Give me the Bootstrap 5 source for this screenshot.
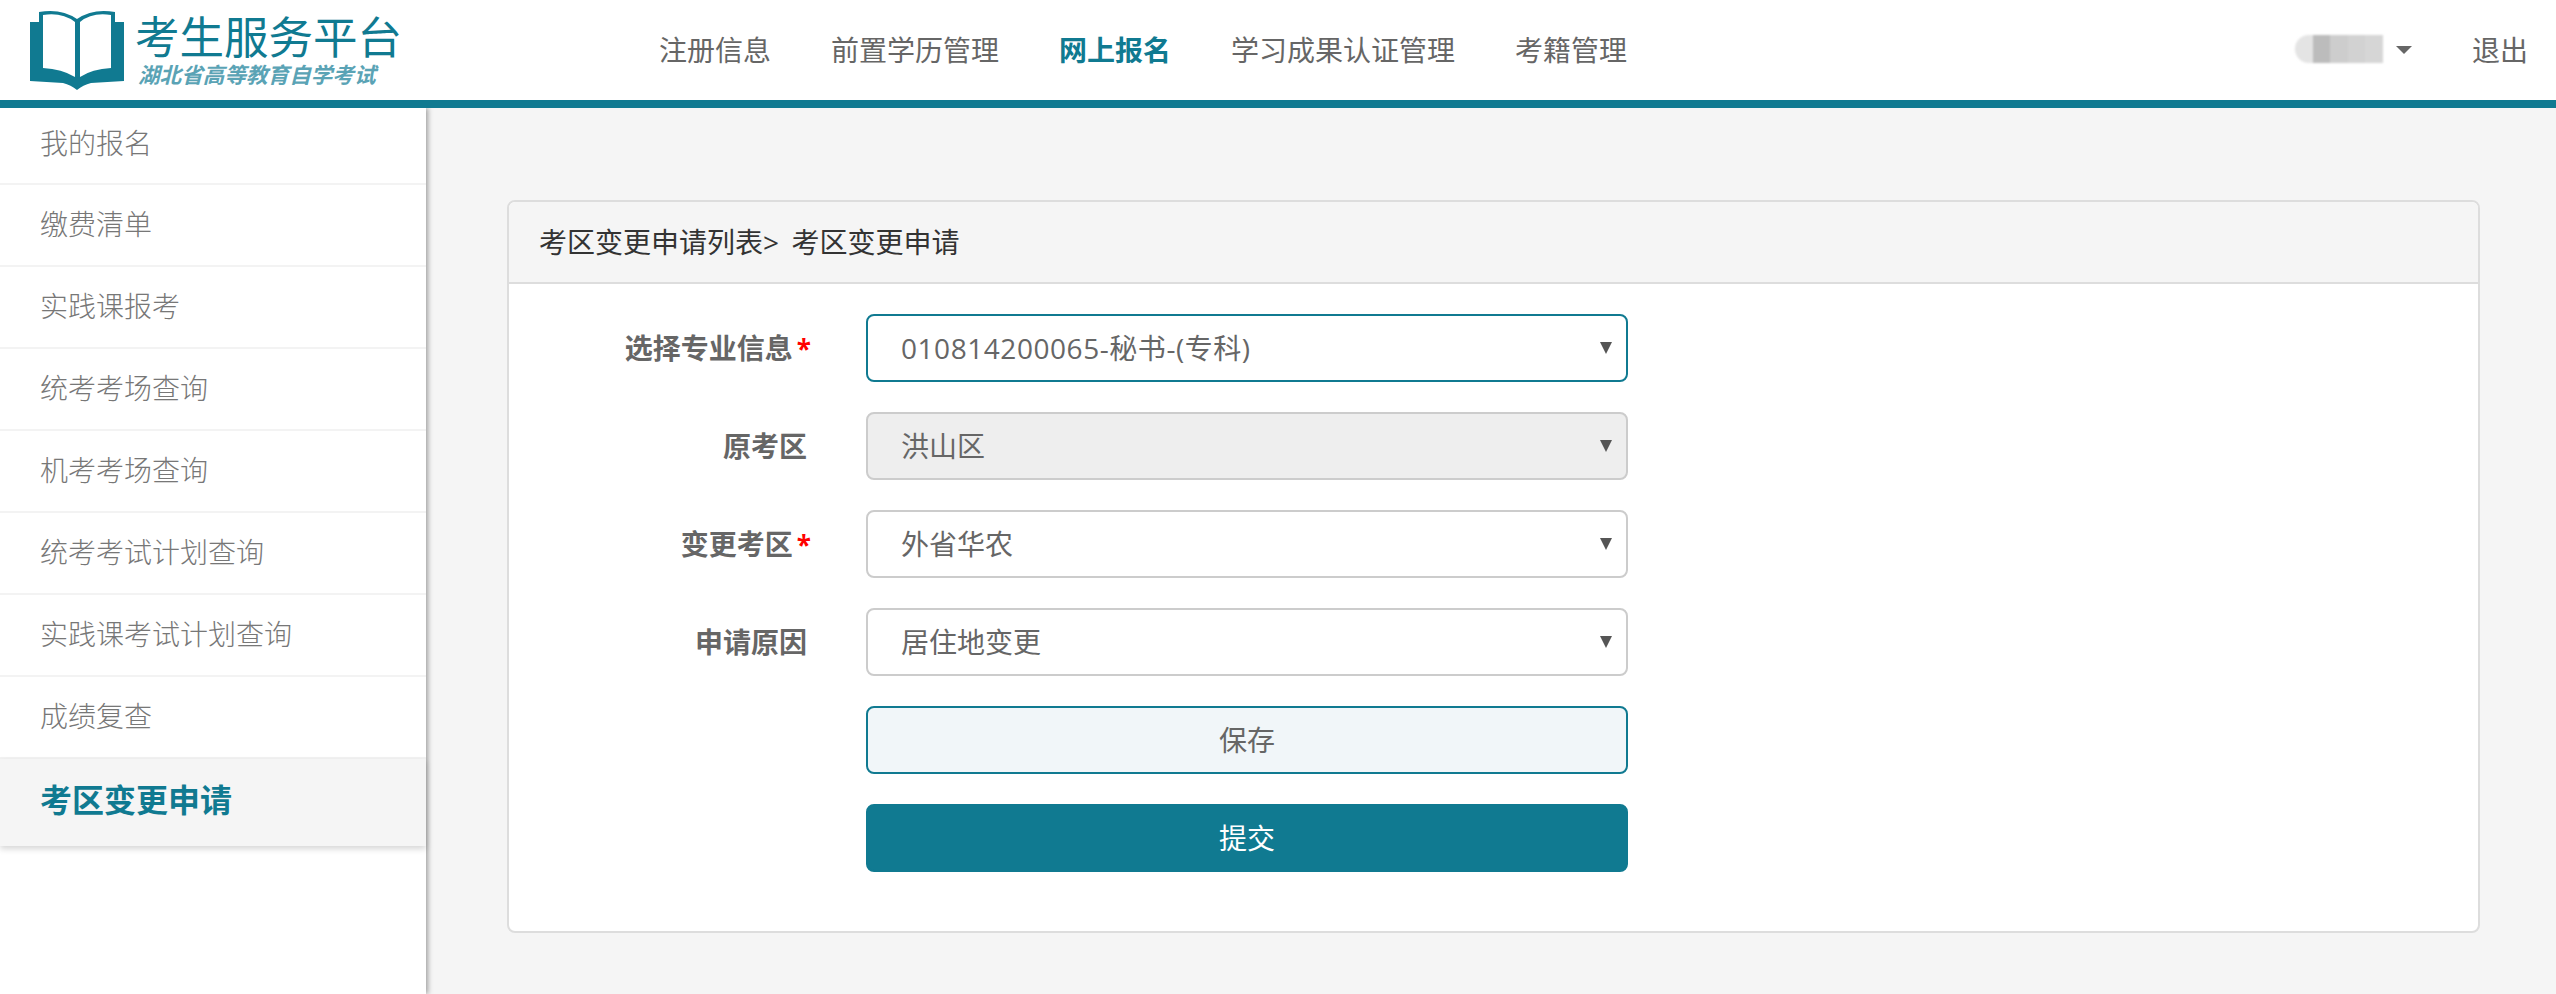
<!DOCTYPE html>
<html lang="zh-CN">
<head>
<meta charset="utf-8">
<title>考区变更申请</title>
<link href="https://cdn.jsdelivr.net/npm/bootstrap@5.3.0/dist/css/bootstrap.min.css" rel="stylesheet">
<style>
:root{--teal:#107a91;}
html,body{height:100%;}
body{background:#f5f5f5;color:#666;font-family:"Open Sans","Noto Sans CJK SC",sans-serif;font-size:28px;overflow:hidden;}
.topbar{height:108px;background:#fff;border-bottom:8px solid var(--teal);position:relative;z-index:3;}
.brand{width:612px;padding-left:30px;gap:11px;color:var(--teal);text-decoration:none;}
.brand-name{font-size:44.5px;line-height:50px;white-space:nowrap;}
.brand-sub{font-size:21.6px;line-height:26px;font-weight:700;font-style:italic;color:#5aa3b5;white-space:nowrap;padding-left:3px;}
.topnav{gap:60px;margin-left:47px;}
.topnav a{color:#666;text-decoration:none;padding:0;}
.topnav a.on{color:var(--teal);font-weight:700;}
.userbox{width:88px;height:30px;position:relative;}
.mosaic{display:flex;height:28px;filter:blur(1px);border-radius:14px 0 0 14px;overflow:hidden;}
.mosaic span{flex:1;background:#d2d2d2;}
.mosaic span:nth-child(1){background:#e4e4e4;}
.mosaic span:nth-child(2){background:#bcbcbc;}
.mosaic span:nth-child(3){background:#cdcdcd;}
.mosaic span:nth-child(4){background:#d2d2d2;}
.mosaic span:nth-child(5){background:#d6d6d6;}
.tri{width:0;height:0;border-left:8px solid transparent;border-right:8px solid transparent;border-top:8px solid #666;margin:0 60px 0 13px;}
.logout{color:#666;text-decoration:none;margin-right:28px;}
.shell{height:calc(100vh - 108px);}
.sidenav{width:426px;background:#fff;box-shadow:2px 0 5px rgba(0,0,0,.35);position:relative;z-index:2;flex:none;}
.sidenav a{display:flex;align-items:center;height:82px;padding:0 0 3px 40px;color:#777;font-weight:300;text-decoration:none;border-bottom:2px solid #f3f3f3;}
.sidenav a:first-child{height:77px;padding-bottom:5px;}
.sidenav a.on{height:87px;padding-bottom:5px;background:#f5f5f5;color:var(--teal);font-size:32px;font-weight:700;border-bottom:0;box-shadow:0 3px 6px rgba(0,0,0,.16);}
.pagebody{padding:92px 76px 0 81px;}
.panel{border:2px solid #ddd;border-radius:8px;background:#fff;overflow:hidden;height:733px;}
.panel-top{height:82px;background:#f5f5f5;border-bottom:2px solid #ddd;padding-left:30px;color:#333;display:flex;align-items:center;word-spacing:-1px;}
.panel-form{padding-top:30px;}
.frow{display:flex;align-items:center;height:68px;margin-bottom:30px;}
.flabel{width:298px;text-align:right;font-weight:700;color:#666;margin:0;flex:none;white-space:nowrap;}
.star{color:#f00;font-style:normal;margin-left:4px;margin-right:-4px;font-size:26px;}
.fctl{width:762px;margin-left:59px;flex:none;}
.frow .form-select{height:68px;border:2px solid #ccc;border-radius:8px;padding:0 35px 0 33px;font-size:28px;color:#666;line-height:64px;background-position:right 13px center;background-size:14px 12px;background-image:url("data:image/svg+xml,%3Csvg xmlns='http://www.w3.org/2000/svg' viewBox='0 0 14 12'%3E%3Cpath fill='%23555' d='M1 0h12L7 12z'/%3E%3C/svg%3E");box-shadow:none;}
.frow .form-select.hot{border-color:var(--teal);letter-spacing:.55px;}
.frow .form-select:disabled{background-color:#eee;color:#666;opacity:1;}
.frow .btn{height:68px;border-radius:8px;font-size:28px;padding:0;line-height:1;}
.btn-keep{background:#f1f6f9;border:2px solid var(--teal);color:#666;}
.btn-send{background:var(--teal);border:2px solid var(--teal);color:#fff;}
</style>
</head>
<body>
<header class="topbar d-flex align-items-center">
  <a class="brand d-flex align-items-center" href="#">
    <svg width="94" height="80" viewBox="0 0 94 80" aria-hidden="true">
      <path fill="#107a91" d="M0 12h9V2q22-4 38 7q16-11 38-7v10h9v59l-33 2q-8 2-14 7q-6-5-14-7l-33-2z"/>
      <path fill="#fff" d="M13 5q19-3 32 7v55q-13-8-32-9z"/>
      <path fill="#fff" d="M81 5q-19-3-31 7v55q12-8 31-9z"/>
    </svg>
    <span class="d-block">
      <span class="brand-name d-block">考生服务平台</span>
      <span class="brand-sub d-block">湖北省高等教育自学考试</span>
    </span>
  </a>
  <nav class="topnav d-flex flex-grow-1">
    <a href="#">注册信息</a>
    <a href="#">前置学历管理</a>
    <a href="#" class="on">网上报名</a>
    <a href="#">学习成果认证管理</a>
    <a href="#">考籍管理</a>
  </nav>
  <div class="userbox"><div class="mosaic"><span></span><span></span><span></span><span></span><span></span></div></div>
  <span class="tri"></span>
  <a class="logout" href="#">退出</a>
</header>
<div class="shell d-flex">
  <aside class="sidenav">
    <a href="#">我的报名</a>
    <a href="#">缴费清单</a>
    <a href="#">实践课报考</a>
    <a href="#">统考考场查询</a>
    <a href="#">机考考场查询</a>
    <a href="#">统考考试计划查询</a>
    <a href="#">实践课考试计划查询</a>
    <a href="#">成绩复查</a>
    <a href="#" class="on">考区变更申请</a>
  </aside>
  <main class="pagebody flex-grow-1">
    <section class="panel">
      <div class="panel-top">考区变更申请列表&gt;&nbsp;&nbsp;考区变更申请</div>
      <form class="panel-form">
        <div class="frow">
          <label class="flabel">选择专业信息<i class="star">*</i></label>
          <div class="fctl"><select class="form-select hot"><option>010814200065-秘书-(专科)</option></select></div>
        </div>
        <div class="frow">
          <label class="flabel">原考区</label>
          <div class="fctl"><select class="form-select" disabled><option>洪山区</option></select></div>
        </div>
        <div class="frow">
          <label class="flabel">变更考区<i class="star">*</i></label>
          <div class="fctl"><select class="form-select"><option>外省华农</option></select></div>
        </div>
        <div class="frow">
          <label class="flabel">申请原因</label>
          <div class="fctl"><select class="form-select"><option>居住地变更</option></select></div>
        </div>
        <div class="frow">
          <span class="flabel"></span>
          <div class="fctl"><button type="button" class="btn btn-keep w-100">保存</button></div>
        </div>
        <div class="frow">
          <span class="flabel"></span>
          <div class="fctl"><button type="button" class="btn btn-send w-100">提交</button></div>
        </div>
      </form>
    </section>
  </main>
</div>
<script src="https://cdn.jsdelivr.net/npm/bootstrap@5.3.0/dist/js/bootstrap.bundle.min.js"></script>
</body>
</html>
